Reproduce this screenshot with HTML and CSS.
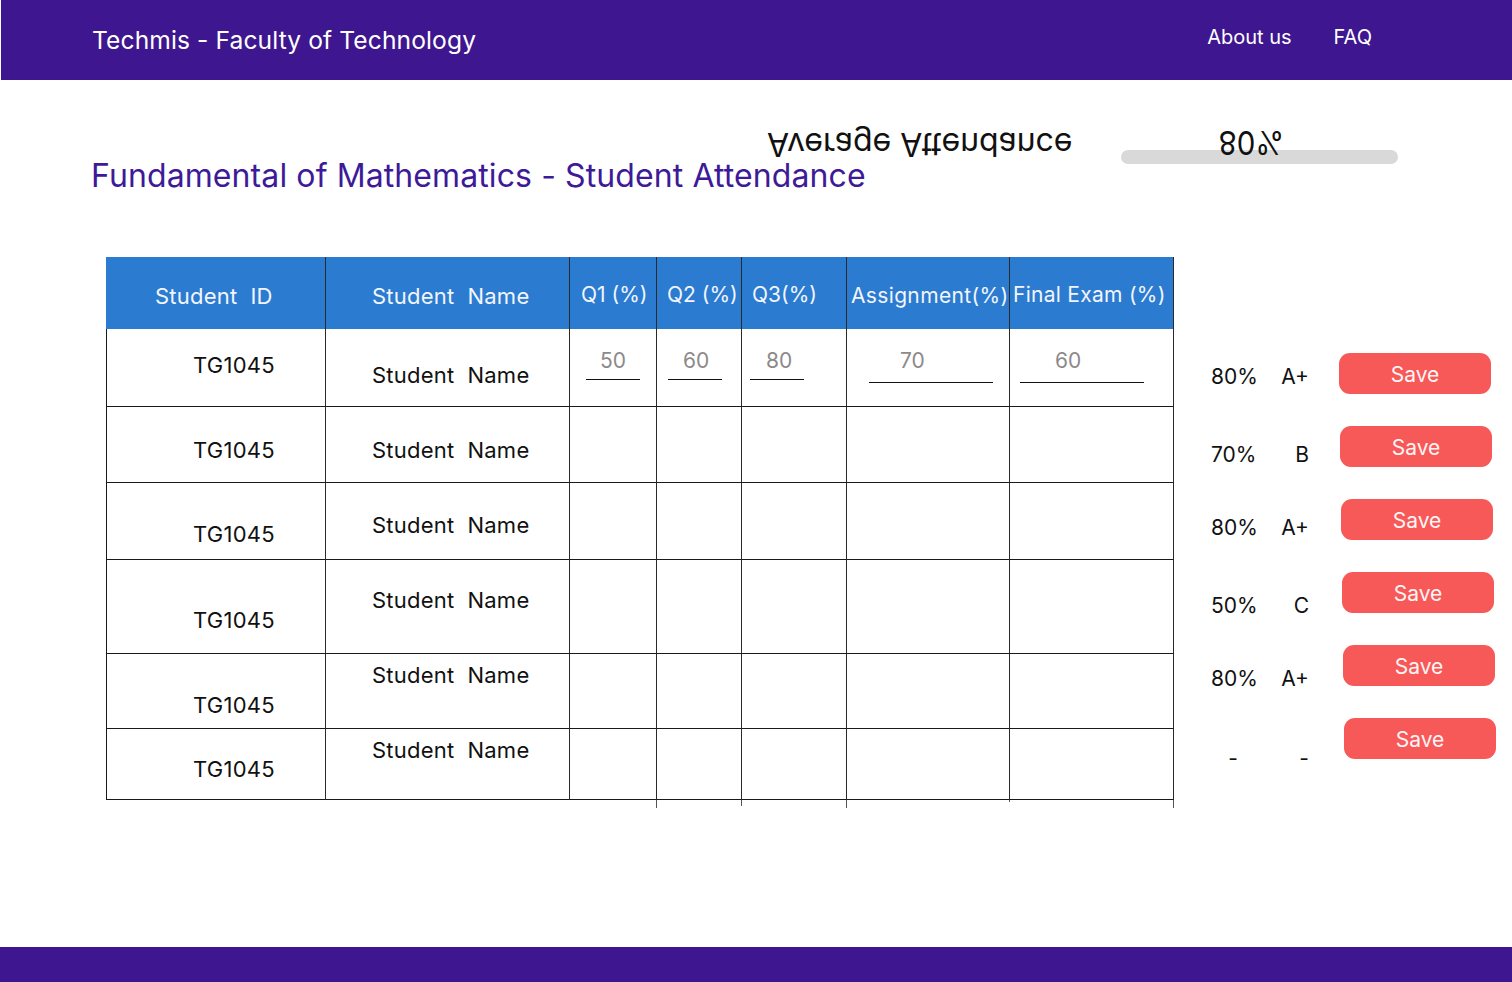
FILE: index.html
```html
<!DOCTYPE html>
<html lang="en">
<head>
<meta charset="utf-8">
<title>Techmis - Student Attendance</title>
<link rel="stylesheet" href="styles.css">
</head>
<body>
<header class="topbar">
  <div class="brand">Techmis - Faculty of Technology</div>
  <nav class="nav">
    <a class="nav-link" href="#">About us</a>
    <a class="nav-link" href="#">FAQ</a>
  </nav>
</header>

<main class="page">
  <section class="hero">
    <div class="stats">
      <span class="avg-label">Average Attendance</span>
      <div class="meter">
        <div class="meter-bar"></div>
        <span class="meter-value">80%</span>
      </div>
    </div>
    <h1 class="title">Fundamental of Mathematics - Student Attendance</h1>
  </section>

  <section class="board">
    <div class="grid">
      <div class="row head">
        <div class="cell th th-id">Student&nbsp; ID</div>
        <div class="cell th th-name">Student&nbsp; Name</div>
        <div class="cell th th-q1">Q1 (%)</div>
        <div class="cell th th-q2">Q2 (%)</div>
        <div class="cell th th-q3">Q3(%)</div>
        <div class="cell th th-as">Assignment(%)</div>
        <div class="cell th th-fe">Final Exam (%)</div>
      </div>
      <div class="row r1">
        <div class="cell id">TG1045</div>
        <div class="cell name">Student&nbsp; Name</div>
        <div class="cell"><input class="field f-q1" value="50"></div>
        <div class="cell"><input class="field f-q2" value="60"></div>
        <div class="cell"><input class="field f-q3" value="80"></div>
        <div class="cell"><input class="field wide f-as" value="70"></div>
        <div class="cell"><input class="field wide f-fe" value="60"></div>
      </div>
      <div class="row r2">
        <div class="cell id">TG1045</div>
        <div class="cell name">Student&nbsp; Name</div>
        <div class="cell"></div><div class="cell"></div><div class="cell"></div><div class="cell"></div><div class="cell"></div>
      </div>
      <div class="row r3">
        <div class="cell id">TG1045</div>
        <div class="cell name">Student&nbsp; Name</div>
        <div class="cell"></div><div class="cell"></div><div class="cell"></div><div class="cell"></div><div class="cell"></div>
      </div>
      <div class="row r4">
        <div class="cell id">TG1045</div>
        <div class="cell name">Student&nbsp; Name</div>
        <div class="cell"></div><div class="cell"></div><div class="cell"></div><div class="cell"></div><div class="cell"></div>
      </div>
      <div class="row r5">
        <div class="cell id">TG1045</div>
        <div class="cell name">Student&nbsp; Name</div>
        <div class="cell"></div><div class="cell"></div><div class="cell"></div><div class="cell"></div><div class="cell"></div>
      </div>
      <div class="row r6">
        <div class="cell id">TG1045</div>
        <div class="cell name">Student&nbsp; Name</div>
        <div class="cell ext"></div>
        <div class="cell ext ext-mid"></div>
        <div class="cell ext"></div>
        <div class="cell ext ext-short"></div>
        <div class="cell ext"></div>
      </div>
    </div>

    <div class="side">
      <div class="srow s1"><span class="pct">80%</span><span class="grade">A+</span><button class="save">Save</button></div>
      <div class="srow s2"><span class="pct">70%</span><span class="grade">B</span><button class="save">Save</button></div>
      <div class="srow s3"><span class="pct">80%</span><span class="grade">A+</span><button class="save">Save</button></div>
      <div class="srow s4"><span class="pct">50%</span><span class="grade">C</span><button class="save">Save</button></div>
      <div class="srow s5"><span class="pct">80%</span><span class="grade">A+</span><button class="save">Save</button></div>
      <div class="srow s6"><span class="pct">-</span><span class="grade">-</span><button class="save">Save</button></div>
    </div>
  </section>
</main>

<footer class="footer"></footer>
</body>
</html>
```

FILE: styles.css
```css
* { box-sizing: border-box; }

html, body { height: 100%; }

body {
  margin: 0;
  font-family: Inter, "Noto Sans", sans-serif;
  color: #111;
  background: #fff;
  display: flex;
  flex-direction: column;
  min-height: 100vh;
}

/* ---------- top bar ---------- */
.topbar {
  height: 80px;
  margin-left: 1px;
  background: #3e168f;
  color: #fff;
  display: flex;
  align-items: flex-start;
  justify-content: space-between;
  flex-shrink: 0;
}

.brand {
  font-size: 24.6px;
  line-height: 30px;
  padding: 25px 0 0 91px;
  letter-spacing: 0.1px;
}

.nav {
  display: flex;
  gap: 42px;
  padding: 25px 140px 0 0;
}

.nav-link {
  color: #fff;
  text-decoration: none;
  font-size: 20px;
  line-height: 24px;
}

/* ---------- hero ---------- */
.page { flex: 1 0 auto; }

.hero {
  padding-top: 45px;
}

.stats {
  display: flex;
  align-items: flex-start;
  padding-left: 767px;
}

.avg-label {
  display: block;
  font-size: 32px;
  line-height: 38px;
  transform: scaleY(-1);
  white-space: nowrap;
}

.meter {
  position: relative;
  width: 277px;
  height: 39px;
  margin-left: 49px;
  display: flex;
  align-items: flex-end;
}

.meter-bar {
  width: 100%;
  height: 14px;
  border-radius: 7px;
  background: #d9d9d9;
}

.meter-value {
  position: absolute;
  left: 97px;
  top: 1px;
  font-size: 29.5px;
  line-height: 34px;
  transform: scaleY(-1.12);
}

.title {
  margin: -7px 0 0 91px;
  font-size: 32px;
  line-height: 38px;
  font-weight: 400;
  letter-spacing: 0.1px;
  color: #3d1a98;
}

/* ---------- board ---------- */
.board {
  display: flex;
  align-items: flex-start;
  margin-top: 62px;
  padding-left: 106px;
}

.grid {
  display: grid;
  grid-template-columns: 220px 244px 87px 85px 105px 163px 164px;
  grid-template-rows: 72px 78px 76px 77px 94px 75px 71px;
}

.row { display: contents; }

.cell {
  position: relative;
  border-right: 1px solid #2a2a2a;
  border-bottom: 1px solid #1a1a1a;
  font-size: 21px;
  line-height: 25px;
  white-space: nowrap;
}

.row .cell:first-child { border-left: 1px solid #1a1a1a; }

.th {
  background: #2b7bd0;
  color: #f2f5fb;
  border-bottom: none;
  padding-top: 27px;
}

.row.head .cell:first-child { border-left: none; }

.th-id, .th-name, .id, .name {
  font-size: 22px;
  letter-spacing: 0.25px;
}

.th-id { padding-left: 49px; }
.th-name { padding-left: 46px; }
.th-q1 { padding-left: 11px; padding-top: 25px; }
.th-q2 { padding-left: 10px; padding-top: 25px; }
.th-q3 { padding-left: 10px; padding-top: 25px; }
.th-as { padding-left: 4px; padding-top: 26px; letter-spacing: 0.35px; }
.th-fe { padding-left: 3px; padding-top: 25px; letter-spacing: 0.28px; }

.id { padding-left: 86px; }
.name { padding-left: 46px; }

.r1 .id { padding-top: 24px; }
.r1 .name { padding-top: 34px; }
.r2 .id { padding-top: 31px; }
.r2 .name { padding-top: 31px; }
.r3 .id { padding-top: 39px; }
.r3 .name { padding-top: 30px; }
.r4 .id { padding-top: 48px; }
.r4 .name { padding-top: 28px; }
.r5 .id { padding-top: 39px; }
.r5 .name { padding-top: 9px; }
.r6 .id { padding-top: 28px; }
.r6 .name { padding-top: 9px; }

.field {
  display: block;
  width: 54px;
  height: 32px;
  margin-top: 19px;
  padding: 0 0 6px 14px;
  border: none;
  border-bottom: 1px solid #111;
  border-radius: 0;
  background: transparent;
  font-family: Inter, "Noto Sans", sans-serif;
  font-size: 21px;
  line-height: 25px;
  color: #8e8989;
  outline: none;
}

.field.wide {
  width: 124px;
  height: 35px;
  margin-top: 19px;
  padding-bottom: 9px;
}

.f-q1 { margin-left: 16px; padding-left: 14px; }
.f-q2 { margin-left: 11px; padding-left: 15px; }
.f-q3 { margin-left: 8px; padding-left: 16px; }
.f-as { margin-left: 22px; padding-left: 31px; }
.f-fe { margin-left: 10px; padding-left: 35px; }

.ext::after {
  content: "";
  position: absolute;
  right: -1px;
  bottom: -9px;
  width: 1px;
  height: 8px;
  background: #555;
}

.ext-mid::after { height: 6px; bottom: -7px; }
.ext-short::after { height: 2px; bottom: -3px; }

/* ---------- side column ---------- */
.side {
  display: flex;
  flex-direction: column;
  gap: 32px;
  margin-left: 37px;
  padding-top: 96px;
}

.srow {
  display: flex;
  align-items: flex-start;
  height: 41px;
}

.pct {
  width: 44px;
  text-align: center;
  font-size: 21px;
  line-height: 25px;
}

.grade {
  width: 54px;
  text-align: right;
  font-size: 21px;
  line-height: 25px;
}

.save {
  width: 152px;
  height: 41px;
  margin-left: 30px;
  padding: 2px 0 0;
  border: none;
  border-radius: 11px;
  background: #f75959;
  color: #fff4f4;
  font-family: Inter, "Noto Sans", sans-serif;
  font-size: 21px;
  line-height: 25px;
  cursor: pointer;
}

.s1 .pct, .s1 .grade { padding-top: 11px; }
.s2 .pct, .s2 .grade { padding-top: 16px; }
.s3 .pct, .s3 .grade { padding-top: 16px; }
.s4 .pct, .s4 .grade { padding-top: 21px; }
.s5 .pct, .s5 .grade { padding-top: 21px; }
.s6 .pct, .s6 .grade { padding-top: 28px; }

.s2 .save { margin-left: 31px; }
.s3 .save { margin-left: 32px; }
.s4 .save { margin-left: 33px; }
.s5 .save { margin-left: 34px; }
.s6 .save { margin-left: 35px; }

/* ---------- footer ---------- */
.footer {
  height: 35px;
  background: #3e168f;
  flex-shrink: 0;
}
```
